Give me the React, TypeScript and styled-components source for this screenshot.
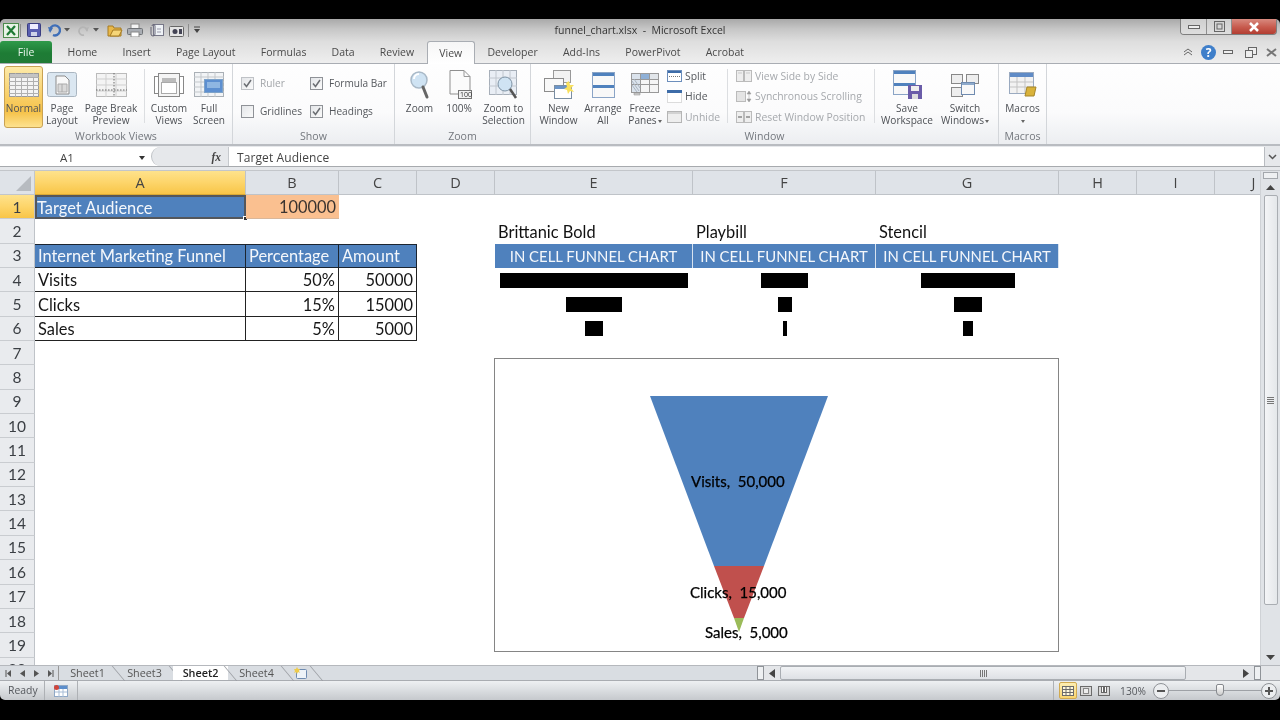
import React from "react";
import styled, { createGlobalStyle } from "styled-components";

const Global = createGlobalStyle`
  html, body { margin: 0; padding: 0; background: #000; }
  body { font-family: "Open Sans", "Liberation Sans", sans-serif; }
  * { box-sizing: border-box; }
`;

const Page = styled.div`
  width: 1280px; height: 720px; background: #000; overflow: hidden;
  padding: 19px 0 20px; display: flex; flex-direction: column; filter: blur(0.3px);
`;
const Chrome = styled.div`
  height: 45px; flex: none;
  background: linear-gradient(180deg, #a9a9a9 0%, #c6c6c6 22%, #dedede 50%, #efefef 100%);
  border-radius: 5px 5px 0 0;
`;
const TitleBar = styled.div`
  height: 22px; display: grid; grid-template-columns: 1fr auto 1fr; align-items: start;
`;
const Qat = styled.div`
  display: flex; align-items: center; height: 22px; padding-left: 3px;
  & > svg { flex: none; }
`;
const Gap = styled.span<{ $w: number }>`
  width: ${p => p.$w}px; flex: none;
`;
const QatSep = styled.span`
  width: 1px; height: 13px; background: #8d8d8d; flex: none;
`;
const Title = styled.div`
  font-size: 10.5px; line-height: 22px; color: #333; white-space: pre;
`;
const WinButtons = styled.div`
  justify-self: end; display: flex; height: 16px; margin-right: 3px;
  border: 1px solid #7e7e7e; border-top: none; border-radius: 0 0 4px 4px; overflow: hidden;
`;
const WinButton = styled.div<{ $w: number; $close?: boolean }>`
  width: ${p => p.$w}px; display: flex; align-items: center; justify-content: center;
  border-right: 1px solid #8e8e8e;
  background: ${p => p.$close
    ? "linear-gradient(180deg, #d88a7f 0%, #c75a4d 55%, #b23d31 100%)"
    : "linear-gradient(180deg, #cfcfcf 0%, #dedede 100%)"};
  &:last-child { border-right: none; }
`;
const TabRow = styled.div`
  height: 23px; display: flex; align-items: stretch; border-bottom: 1px solid #a9adb3;
`;
const FileTab = styled.div`
  width: 52px; margin-right: 3px; background: linear-gradient(180deg, #2f9a4a 0%, #1e7c35 55%, #207a36 100%);
  color: #eaf5ec; font-size: 10.5px; display: flex; align-items: center; justify-content: center;
  border-radius: 3px 3px 0 0;
`;
const Tab = styled.div<{ $active?: boolean }>`
  padding: 0 ${p => (p.$active ? 11.6 : 12.6)}px; font-size: 10.5px; line-height: 22px; color: #4a4a4a; white-space: nowrap;
  margin-bottom: ${p => (p.$active ? "-1px" : "0")};
  ${p => p.$active ? "background: linear-gradient(180deg,#f6f6f6,#fff); border: 1px solid #a9adb3; border-bottom: none; border-radius: 3px 3px 0 0;" : ""}
`;
const RightControls = styled.div`
  margin-left: auto; display: flex; align-items: center; padding-right: 3.5px;
  & > svg { flex: none; }
`;
const Ribbon = styled.div`
  height: 80px; flex: none; display: flex;
  background: linear-gradient(180deg, #fefefe 0%, #fbfbfc 60%, #eceef1 100%);
`;
const Group = styled.div<{ $w: number }>`
  width: ${p => p.$w}px; flex: none; display: flex; flex-direction: column;
  border-right: 1px solid #d3d6da;
`;
const GroupBody = styled.div<{ $pad?: number }>`
  height: 63px; display: flex; padding: 2px 0 0 ${p => p.$pad ?? 0}px;
`;
const GroupLabel = styled.div`
  height: 17px; text-align: center; font-size: 10.6px; line-height: 18px; color: #74787e;
`;
const BigButton = styled.div<{ $w: number; $on?: boolean }>`
  width: ${p => p.$w}px; height: 62px; flex: none; display: flex; flex-direction: column; align-items: center;
  border-radius: 3px; border: 1px solid ${p => (p.$on ? "#c9a253" : "transparent")};
  background: ${p => p.$on ? "linear-gradient(180deg,#fdeaa9 0%,#f9d16c 45%,#f6c24a 75%,#fde28e 100%)" : "none"};
`;
const IconBox = styled.div`
  height: 35px; width: 100%; display: flex; align-items: center; justify-content: center;
`;
const BigLabel = styled.div`
  font-size: 10.1px; line-height: 12px; color: #4e5156; text-align: center; white-space: pre;
`;
const DownCaret = styled.span`
  display: inline-block; vertical-align: middle; margin-left: 1px; border: 2.5px solid transparent; border-top: 3px solid #666; border-bottom: none;
`;
const Divider = styled.div<{ $ml: number; $mr: number }>`
  width: 1px; height: 54px; margin: 3px ${p => p.$mr}px 0 ${p => p.$ml}px; background: #dcdee1; flex: none;
`;
const CheckGrid = styled.div`
  display: grid; grid-template-columns: 69px auto; grid-auto-rows: 28px; padding: 3px 0 0 8px;
`;
const CheckRow = styled.div<{ $off?: boolean }>`
  display: flex; align-items: center; gap: 6px; font-size: 10.1px; white-space: nowrap;
  color: ${p => (p.$off ? "#a2a5a9" : "#55585d")};
`;
const CheckBox = styled.span<{ $off?: boolean }>`
  width: 13px; height: 13px; flex: none; border: 1px solid ${p => (p.$off ? "#bfc2c6" : "#8f9297")};
  background: linear-gradient(135deg, #e4e6e9, #fafafa); display: flex; align-items: center; justify-content: center;
`;
const SmallStack = styled.div<{ $w: number; $ml?: number }>`
  width: ${p => p.$w}px; margin-left: ${p => p.$ml ?? 0}px; flex: none; display: flex; flex-direction: column;
`;
const SmallRow = styled.div<{ $off?: boolean }>`
  height: 20.5px; display: flex; align-items: center; gap: 3px; font-size: 10.4px; white-space: nowrap;
  color: ${p => (p.$off ? "#a6a9ad" : "#55585d")};
  & > svg { flex: none; }
`;
const FormulaStrip = styled.div`
  height: 26px; flex: none; background: #e6e8eb; border-top: 2px solid #b9bcc1; padding-top: 1px;
`;
const FormulaInner = styled.div`
  height: 20px; display: flex; background: #fff; border-bottom: 1px solid #a7aaae;
`;
const NameBox = styled.div`
  width: 148px; flex: none; position: relative; text-align: center; padding-right: 14px;
  font-size: 11.6px; line-height: 21px; color: #444;
  &::after { content: ""; position: absolute; right: 3px; top: 9px; border: 3px solid transparent; border-top: 4px solid #333; border-bottom: none; }
`;
const FxBox = styled.div`
  width: 78px; flex: none; display: flex; align-items: center; justify-content: flex-end; padding-right: 7px;
  background: #e6e8eb; border-radius: 12px 0 0 12px; margin-left: 3px; border-left: 1px solid #bfc2c6;
  border-right: 1px solid #c6c9cd; font: italic bold 11.5px "Liberation Serif", serif; color: #444;
`;
const FormulaText = styled.div`
  flex: 1; padding-left: 8px; font-size: 12px; line-height: 21px; color: #444; letter-spacing: 0.1px;
`;
const FormulaExpand = styled.div`
  width: 16px; flex: none; background: #e6e8eb; border-left: 1px solid #b9bcc1; display: flex; align-items: center; justify-content: center;
`;
const SheetArea = styled.div`
  flex: 1; display: flex; min-height: 0; background: #fff; border-top: 1px solid #c3c6ca;
`;
const SheetWrap = styled.div`
  width: 1260px; flex: none; position: relative; overflow: hidden;
`;
const SheetGrid = styled.div`
  display: grid;
  grid-template-columns: 35px 211px 93px 78px 78px 198px 183px 183px 78px 78px 78px;
  grid-template-rows: 24px repeat(20, 24.35px);
  font-family: "Lato", "Liberation Sans", sans-serif;
`;
const Corner = styled.div`
  background: #dfe3e8; border-right: 1px solid #c2c6cb; border-bottom: 1px solid #c2c6cb; position: relative;
  &::after { content: ""; position: absolute; right: 3px; bottom: 3px; border-style: solid; border-width: 0 0 15px 15px; border-color: transparent transparent #b7bbc0 transparent; }
`;
const ColHead = styled.div<{ $sel?: boolean }>`
  background: ${p => (p.$sel ? "linear-gradient(180deg,#fee28c 0%,#fdd56a 50%,#f8c548 100%)" : "#dfe3e8")};
  border-right: 1px solid #bfc3c8; border-bottom: 1px solid ${p => (p.$sel ? "#d9a935" : "#bfc3c8")};
  display: flex; align-items: center; justify-content: center; font-family: "Open Sans", sans-serif; font-size: 14.5px; color: #444;
`;
const RowHead = styled.div<{ $sel?: boolean }>`
  background: ${p => (p.$sel ? "linear-gradient(180deg,#fee28c 0%,#fdd56a 50%,#f8c548 100%)" : "#e9ebee")};
  border-right: 1px solid #bfc3c8; border-bottom: 1px solid #c9ccd0;
  display: flex; align-items: center; justify-content: center; font-size: 15.5px; color: #3b3f44;
`;
type Tone = "plain" | "title" | "target" | "head" | "body" | "chartHead";
const toneCss: Record<Tone, string> = {
  plain: "color:#111;",
  title: "background:#4f81bd;color:#f4f7fb;border:2px solid #54575c;padding-left:0;",
  target: "background:#fac090;color:#3b3430;border-bottom:1px solid #d9b79a;",
  head: "background:#4f81bd;color:#f4f7fb;border-top:1px solid #1c2530;border-right:1px solid #1c2530;border-bottom:1px solid #1c2530;",
  body: "color:#161616;border-right:1px solid #222;border-bottom:1px solid #222;",
  chartHead: "background:#4f81bd;color:#f4f7fb;border-right:1px solid #d7e2ef;font-size:14.9px;",
};
const Cell = styled.div<{ $tone: Tone; $align: string }>`
  position: relative; display: flex; align-items: center; white-space: nowrap; overflow: visible;
  justify-content: ${p => p.$align}; padding: 0 3px; font-size: 16.4px;
  ${p => toneCss[p.$tone]}
`;
const Handle = styled.span`
  position: absolute; right: -4px; bottom: -4px; width: 5px; height: 5px; background: #333; border: 1px solid #fff;
`;
const Bar = styled.span<{ $w: number }>`
  width: ${p => p.$w}px; height: 15px; background: #000; flex: none;
`;
const ChartFrame = styled.div`
  position: absolute; left: 494px; top: 187px; width: 565px; height: 294px; background: #fff; border: 1px solid #858585;
`;
const ChartSvg = styled.svg`
  display: block; position: absolute; left: -1px; top: -1px;
`;
const ChartLabel = styled.div<{ $x: number; $y: number }>`
  position: absolute; left: ${p => p.$x}px; top: ${p => p.$y}px; font-family: "Lato", sans-serif; font-size: 15px; line-height: 16px;
  color: #000; white-space: pre; font-weight: 400; -webkit-text-stroke: 0.25px #000;
`;
const VScroll = styled.div`
  width: 20px; flex: none; background: #e0e3e7; border-left: 1px solid #cfd2d6; display: flex; flex-direction: column; align-items: center;
`;
const VSplit = styled.div`
  width: 15px; height: 7px; margin-top: 1px; background: #eef0f2; border: 1px solid #a3a7ac; flex: none;
`;
const ArrowCell = styled.div<{ $h: number }>`
  height: ${p => p.$h}px; flex: none; display: flex; align-items: center; justify-content: center;
`;
const VThumb = styled.div`
  width: 14px; height: 410px; flex: none; background: linear-gradient(90deg,#f4f5f7,#e4e7ea); border: 1px solid #a9adb2; border-radius: 2px;
  display: flex; align-items: center; justify-content: center;
`;
const VSpace = styled.div` flex: 1; `;
const VGrip = styled.span`
  width: 7px; height: 7px; background: repeating-linear-gradient(180deg,#777 0 1px,transparent 1px 2px);
`;
const TabStrip = styled.div`
  height: 16px; flex: none; display: flex; background: #d9dde2; border-top: 1px solid #b5b8bd; border-bottom: 1px solid #a9acb1;
`;
const SheetNav = styled.div`
  width: 59px; flex: none; display: flex; align-items: center; gap: 9px; padding-left: 5px; border-right: 1px solid #999;
  & > svg { flex: none; }
`;
const SheetTab = styled.div<{ $active?: boolean }>`
  width: ${p => (p.$active ? 55 : 57)}px; flex: none; text-align: center; font-size: 10.8px; line-height: 14px; position: relative;
  color: ${p => (p.$active ? "#222" : "#555")}; font-weight: ${p => (p.$active ? 600 : 400)};
  background: ${p => (p.$active ? "#fff" : "none")};
  &::after { content: ""; position: absolute; right: -3px; top: 0; height: 15px; border-right: 1px solid #9b9ea3; transform: skewX(40deg); }
`;
const NewSheet = styled.div`
  width: 32px; flex: none; display: flex; align-items: center; justify-content: center; position: relative;
  &::after { content: ""; position: absolute; right: 0; top: 0; height: 15px; border-right: 1px solid #9b9ea3; transform: skewX(40deg); }
`;
const HScroll = styled.div`
  margin-left: auto; width: 523px; flex: none; display: flex; align-items: center; background: #e4e6e9;
  & > svg { flex: none; }
`;
const HThumb = styled.div`
  width: 406px; height: 14px; margin: 0 57px 0 5px; background: linear-gradient(180deg,#f1f3f5,#dee1e5); border: 1px solid #a9adb2; border-radius: 2px;
  display: flex; align-items: center; justify-content: center; flex: none;
`;
const HGrip = styled.span`
  width: 7px; height: 7px; background: repeating-linear-gradient(90deg,#777 0 1px,transparent 1px 2px);
`;
const HSplit = styled.div<{ $ml: number; $mr: number }>`
  width: 7px; height: 14px; margin: 0 ${p => p.$mr}px 0 ${p => p.$ml}px; background: #eef0f2; border: 1px solid #8f9398; flex: none;
`;
const StatusBar = styled.div`
  height: 19px; flex: none; display: flex; align-items: center; background: linear-gradient(180deg,#eef0f2 0%,#dcdfe2 45%,#c6c9cd 100%);
  font-size: 10.4px; color: #55585d; border-radius: 0 0 5px 5px;
`;
const StatusText = styled.div`
  width: 45px; flex: none; padding-left: 8px; border-right: 1px solid #aeb1b5; height: 19px; line-height: 18px;
`;
const StatusIcon = styled.div`
  width: 33px; flex: none; height: 19px; border-right: 1px solid #aeb1b5; display: flex; align-items: center; justify-content: center;
`;
const StatusRight = styled.div`
  margin-left: auto; display: flex; align-items: center; height: 19px; border-left: 1px solid #aeb1b5; padding-left: 5px; width: 227px;
  & > svg { flex: none; }
`;
const ViewBtn = styled.div<{ $on?: boolean }>`
  width: 18px; height: 17px; flex: none; display: flex; align-items: center; justify-content: center; border-radius: 2px;
  border: 1px solid ${p => (p.$on ? "#d1aa50" : "transparent")};
  background: ${p => (p.$on ? "linear-gradient(180deg,#fdeeb3,#f9d56f)" : "none")};
`;
const ZoomText = styled.div`
  width: 33px; flex: none; text-align: right; margin-right: 7px; font-size: 10.2px;
`;
const SliderTrack = styled.div`
  width: 92px; height: 1px; flex: none; background: #9ea1a6; position: relative;
`;
const SliderKnob = styled.span`
  position: absolute; left: 47px; top: -6px; width: 8px; height: 12px; background: linear-gradient(180deg,#fff,#ccc);
  border: 1px solid #85888d; border-radius: 2px 2px 4px 4px;
`;

const Ic: React.FC<{ w: number; h: number; children: React.ReactNode }> = ({ w, h, children }) => (
  <svg width={w} height={h} viewBox={`0 0 ${w} ${h}`} fill="none">{children}</svg>
);

const TinyCaret = () => <Ic w={7} h={4}><path d="M0 0h6L3 3.500z" fill="#555" /></Ic>;

const icons = {
  normal: <Ic w={30} h={24}><rect x=".5" y=".5" width="29" height="23" fill="#f4f4f4" stroke="#9a9a9a" /><path d="M0 4.500h30M0 8.500h30M0 12.500h30M0 16.500h30M0 20.500h30M6.500 0v24M12.500 0v24M18.500 0v24M24.500 0v24" stroke="#b0b0b0" /><rect x="1" y="1" width="28" height="3" fill="#c4c4c4" /></Ic>,
  layout: <Ic w={30} h={25}><rect x=".5" y=".5" width="29" height="24" rx="2" fill="#dbe7f1" stroke="#aab6c1" /><path d="M9 4h9l4 4v14H9z" fill="#f8f8f8" stroke="#8b8b8b" /><path d="M11 12h9v8h-9z" fill="#d9d9d9" stroke="#aaa" /><path d="M15 12v8" stroke="#aaa" /></Ic>,
  breakV: <Ic w={31} h={24}><rect x=".5" y=".5" width="30" height="23" fill="#f4f4f4" stroke="#bbb" /><path d="M0 6h31M0 12h31M0 18h31M10 0v24M20 0v24" stroke="#cfcfcf" /><path d="M0 17h31M18 0v24" stroke="#6a6a6a" strokeDasharray="1.500 1.500" /></Ic>,
  custom: <Ic w={30} h={24}><rect x=".5" y="3.500" width="29" height="17" fill="#fff" stroke="#888" /><rect x="4.500" y=".5" width="21" height="23" fill="#f5f5f5" stroke="#888" /><rect x="8" y="5" width="14" height="5" fill="#bbb" /><rect x="7.500" y="9.500" width="15" height="11" fill="#fff" stroke="#aaa" /></Ic>,
  full: <Ic w={30} h={25}><rect x=".5" y=".5" width="29" height="24" fill="#f2f4f6" stroke="#aab0b6" /><path d="M0 5h30M0 10h30M0 15h30M0 20h30M7 0v25M14 0v25M21 0v25" stroke="#c3c7cb" /><rect x="10.500" y="7.500" width="18" height="13" fill="#5d8fd0" stroke="#7da2c9" /><rect x="13" y="10" width="13" height="6" fill="#8fb6e2" /></Ic>,
  zoom: <Ic w={19} h={28}><circle cx="9" cy="9" r="8" fill="#cfe3f3" stroke="#a9b9c7" strokeWidth="1.500" /><path d="M4 8a5 5 0 0 1 5-5" stroke="#fff" strokeWidth="2" /><path d="M13 16l4 10" stroke="#666" strokeWidth="3" strokeLinecap="round" /></Ic>,
  hundred: <Ic w={25} h={30}><path d="M3 .5h14l6 6V24H3z" fill="#fbfbfb" stroke="#8f8f8f" /><path d="M17 .5v6h6" stroke="#999" /><rect x="11.500" y="20.500" width="13" height="8" fill="#f2f2f2" stroke="#777" /><text x="13" y="27" fontSize="7" fontFamily="Open Sans" fill="#333">100</text></Ic>,
  zoomSel: <Ic w={29} h={30}><rect x=".5" y=".5" width="27" height="24" fill="#e9eef5" stroke="#a7afb9" /><path d="M0 8h28M0 16h28M7 0v25M14 0v25M21 0v25" stroke="#c0c6ce" /><circle cx="16" cy="14" r="7" fill="#cfe3f3" stroke="#7f93a5" /><path d="M21 19l6 9" stroke="#555" strokeWidth="2.500" /></Ic>,
  newWin: <Ic w={30} h={29}><rect x="9.500" y=".5" width="17" height="12" fill="#f2f2f2" stroke="#999" /><rect x=".5" y="8.500" width="19" height="13" fill="#f8f8f8" stroke="#8c8c8c" /><rect x="10.500" y="15.500" width="17" height="13" fill="#fff" stroke="#7a8ea3" /><rect x="11" y="16" width="16" height="3" fill="#6a94c8" /><path d="M25 11l1 4 4 0-3 3 3 4-4-1-2 3-1-4-3-1 3-2-1-4z" fill="#f8e05c" /></Ic>,
  arrange: <Ic w={23} h={26}><rect x=".5" y=".5" width="22" height="25" fill="#f8f8f8" stroke="#8aa4c6" /><rect x="1" y="1" width="21" height="3" fill="#4f81bd" /><rect x="1" y="13" width="21" height="3" fill="#4f81bd" /></Ic>,
  freeze: <Ic w={28} h={23}><rect x=".5" y=".5" width="27" height="19" fill="#f5f5f5" stroke="#999" /><rect x="1" y="1" width="26" height="5" fill="#e2e6ea" /><rect x="1" y="1" width="9" height="18" fill="#dbe3ec" /><rect x="10" y="1" width="8" height="5" fill="#8fb0d6" /><path d="M0 6.500h28M0 11.500h28M9.500 0v20M18.500 0v20" stroke="#999" /><path d="M1 8l7 10M1 12l5 7M3 6l6 9" stroke="#a9b4c0" /><path d="M3 20h6v2H3z" fill="#d0d0d0" stroke="#888" strokeWidth=".5" /></Ic>,
  split: <Ic w={15} h={12}><rect x=".5" y=".5" width="14" height="11" fill="#fff" stroke="#6c8ebc" /><rect x="1" y="1" width="13" height="2" fill="#3d6ca8" /><path d="M2 6.500h11" stroke="#777" strokeDasharray="1 1" /></Ic>,
  hide: <Ic w={15} h={13}><rect x=".5" y=".5" width="14" height="12" fill="#fff" stroke="#bbb" strokeDasharray="1 1" /><rect x="0" y="0" width="15" height="3" fill="#3d6ca8" /></Ic>,
  unhide: <Ic w={15} h={12}><rect x=".5" y=".5" width="14" height="11" fill="#eee" stroke="#b5b5b5" /><rect x="1" y="1" width="13" height="2" fill="#d2d2d2" /></Ic>,
  sideBySide: <Ic w={16} h={12}><rect x=".5" y=".5" width="7" height="11" fill="#eee" stroke="#bbb" /><rect x="8.500" y=".5" width="7" height="11" fill="#eee" stroke="#bbb" /><path d="M2 3h4M10 3h4" stroke="#c9c9c9" /></Ic>,
  syncScroll: <Ic w={16} h={13}><rect x=".5" y="1.500" width="9" height="10" fill="#e4e4e4" stroke="#bbb" /><path d="M13 1l2 3h-4zM13 12l2-3h-4zM13 4v5" fill="#999" stroke="#999" strokeWidth=".5" /></Ic>,
  resetPos: <Ic w={16} h={12}><rect x=".5" y=".5" width="7" height="11" fill="#eee" stroke="#bbb" /><rect x="8.500" y=".5" width="7" height="11" fill="#eee" stroke="#bbb" /><path d="M2 6h4M14 6h-4" stroke="#8a8a8a" strokeWidth="1.500" /></Ic>,
  save: <Ic w={29} h={29}><rect x=".5" y=".5" width="22" height="24" fill="#f8f8f8" stroke="#8aa4c6" /><rect x="1" y="1" width="21" height="3" fill="#4f81bd" /><rect x="1" y="13" width="21" height="3" fill="#4f81bd" /><rect x="15" y="15" width="14" height="14" fill="#6a5ca8" /><rect x="18" y="16" width="8" height="5" fill="#eee" /><rect x="19" y="24" width="6" height="5" fill="#ddd" /></Ic>,
  switchW: <Ic w={28} h={24}><rect x=".5" y="1.500" width="11" height="9" fill="#eee" stroke="#888" /><rect x="15.500" y="1.500" width="12" height="9" fill="#eee" stroke="#888" /><rect x=".5" y="14.500" width="11" height="9" fill="#eee" stroke="#888" /><rect x="10.500" y="9.500" width="13" height="12" fill="#f8f8f8" stroke="#6f8bb0" /><rect x="11" y="10" width="12" height="2" fill="#8eaacb" /></Ic>,
  macros: <Ic w={28} h={25}><rect x=".5" y=".5" width="24" height="21" fill="#f2f2f2" stroke="#9aaac0" /><rect x="1" y="1" width="23" height="4" fill="#5f8bc6" /><path d="M1 10h23M1 15h23M8 5v16M16 5v16" stroke="#c3c3c3" /><path d="M18 15h9l-2 9h-9z" fill="#d9b23a" stroke="#a4852a" /></Ic>,
};

const Big: React.FC<{ w: number; on?: boolean; icon: React.ReactNode; label: React.ReactNode }> = ({ w, on, icon, label }) => (
  <BigButton $w={w} $on={on}><IconBox>{icon}</IconBox><BigLabel>{label}</BigLabel></BigButton>
);

const Check = () => <svg width="11" height="11" viewBox="0 0 11 11" fill="none"><path d="M2 5.500l2.500 3L9 2" stroke="#6b6e73" strokeWidth="1.500" /></svg>;

const COLS = ["A", "B", "C", "D", "E", "F", "G", "H", "I", "J"];
type CellSpec = { t?: string; tone?: Tone; align?: string; bar?: number; handle?: boolean };
const END = "flex-end", MID = "center";
const CELLS: Record<string, CellSpec> = {
  A1: { t: "Target Audience", tone: "title", handle: true },
  B1: { t: "100000", tone: "target", align: END },
  E2: { t: "Brittanic Bold" }, F2: { t: "Playbill" }, G2: { t: "Stencil" },
  A3: { t: "Internet Marketing Funnel", tone: "head" },
  B3: { t: "Percentage", tone: "head" },
  C3: { t: "Amount", tone: "head" },
  E3: { t: "IN CELL FUNNEL CHART", tone: "chartHead", align: MID },
  F3: { t: "IN CELL FUNNEL CHART", tone: "chartHead", align: MID },
  G3: { t: "IN CELL FUNNEL CHART", tone: "chartHead", align: MID },
  A4: { t: "Visits", tone: "body" }, B4: { t: "50%", tone: "body", align: END }, C4: { t: "50000", tone: "body", align: END },
  A5: { t: "Clicks", tone: "body" }, B5: { t: "15%", tone: "body", align: END }, C5: { t: "15000", tone: "body", align: END },
  A6: { t: "Sales", tone: "body" }, B6: { t: "5%", tone: "body", align: END }, C6: { t: "5000", tone: "body", align: END },
  E4: { bar: 188 }, E5: { bar: 56 }, E6: { bar: 18 },
  F4: { bar: 47 }, F5: { bar: 14 }, F6: { bar: 4 },
  G4: { bar: 94 }, G5: { bar: 28 }, G6: { bar: 10 },
};

export default function App() {
  const rows = Array.from({ length: 20 }, (_, i) => i + 1);
  return (
    <Page>
      <Global />
      <Chrome>
        <TitleBar>
          <Qat>
            <Ic w={16} h={15}><rect x=".5" y=".5" width="15" height="14" fill="#e8f3e6" stroke="#4c8c4c" /><path d="M4 3l8 9M12 3l-8 9" stroke="#1f7a35" strokeWidth="2.200" /></Ic>
            <Gap $w={1} /><QatSep /><Gap $w={6} />
            <Ic w={14} h={14}><rect x=".5" y=".5" width="13" height="13" rx="1" fill="#5a5fb0" stroke="#3a3d80" /><rect x="3" y="1" width="8" height="5" fill="#eef" /><rect x="4" y="9" width="6" height="4" fill="#cfd3e8" /></Ic>
            <Gap $w={7} />
            <Ic w={13} h={13}><path d="M2 7a5 5 0 1 1 3 4" stroke="#3f6fb8" strokeWidth="2.400" /><path d="M0 3l5 1-3 5z" fill="#3f6fb8" /></Ic>
            <Gap $w={3} />
            <TinyCaret />
            <Gap $w={6} />
            <Ic w={12} h={12}><path d="M10 7a4 4 0 1 0-3 4" stroke="#b5b5b5" strokeWidth="1.800" /><path d="M12 3l-4 1 2 4z" fill="#b5b5b5" /></Ic>
            <Gap $w={4} />
            <TinyCaret />
            <Gap $w={7} />
            <Ic w={16} h={14}><path d="M1 3h5l1 2h7v8H1z" fill="#e8b84a" stroke="#a57a22" /><path d="M3 13l3-6h9l-3 6z" fill="#f6d679" stroke="#a57a22" /></Ic>
            <Gap $w={4} />
            <Ic w={16} h={14}><rect x="4" y="1" width="8" height="5" fill="#f4f4f4" stroke="#888" /><rect x=".5" y="5.500" width="15" height="6" rx="1" fill="#a9adb3" stroke="#6f7276" /><rect x="4" y="9" width="8" height="5" fill="#fff" stroke="#888" /></Ic>
            <Gap $w={5} />
            <Ic w={16} h={14}><rect x="5.500" y="1.500" width="10" height="11" fill="#eef2f6" stroke="#778" /><path d="M3 4v7a2 2 0 0 0 4 0V3a1.500 1.500 0 0 0-3 0" stroke="#667" /><path d="M9 6h4M9 9h4" stroke="#99a" /></Ic>
            <Gap $w={5} />
            <Ic w={15} h={13}><rect x=".5" y="2.500" width="14" height="10" rx="1" fill="#e4e4e4" stroke="#666" /><circle cx="6" cy="7.500" r="2.500" fill="#445" /><rect x="10" y="5" width="3" height="5" fill="#445" /></Ic>
            <Gap $w={4} /><QatSep /><Gap $w={5} />
            <Ic w={7} h={8}><path d="M0 1h6" stroke="#444" /><path d="M0 3h6L3 7z" fill="#444" /></Ic>
          </Qat>
          <Title>funnel_chart.xlsx  -  Microsoft Excel</Title>
          <WinButtons>
            <WinButton $w={26}><Ic w={12} h={4}><rect x=".5" y=".5" width="11" height="3" fill="#eee" stroke="#666" /></Ic></WinButton>
            <WinButton $w={25}><Ic w={11} h={11}><rect x=".5" y=".5" width="10" height="10" fill="none" stroke="#666" /><rect x="3" y="3" width="5" height="5" fill="none" stroke="#666" /></Ic></WinButton>
            <WinButton $w={44} $close><Ic w={12} h={10}><path d="M2 1l8 8M10 1l-8 8" stroke="#fff" strokeWidth="2.500" /></Ic></WinButton>
          </WinButtons>
        </TitleBar>
        <TabRow>
          <FileTab>File</FileTab>
          <Tab>Home</Tab><Tab>Insert</Tab><Tab>Page Layout</Tab><Tab>Formulas</Tab><Tab>Data</Tab><Tab>Review</Tab>
          <Tab $active>View</Tab>
          <Tab>Developer</Tab><Tab>Add-Ins</Tab><Tab>PowerPivot</Tab><Tab>Acrobat</Tab>
          <RightControls>
            <Ic w={10} h={8}><path d="M1 4l4-3 4 3M1 7l4-3 4 3" stroke="#666" /></Ic>
            <Gap $w={7.5} />
            <Ic w={15} h={15}><circle cx="7.500" cy="7.500" r="7.500" fill="#3f7fca" /><text x="7.500" y="12" fontSize="12" fontWeight="700" textAnchor="middle" fontFamily="Open Sans" fill="#fff">?</text></Ic>
            <Gap $w={7.5} />
            <Ic w={10} h={4}><rect x=".5" y=".5" width="9" height="3" fill="#eee" stroke="#666" /></Ic>
            <Gap $w={12} />
            <Ic w={12} h={11}><rect x="3.500" y=".5" width="8" height="7" fill="#eee" stroke="#666" /><rect x=".5" y="3.500" width="7" height="7" fill="#eee" stroke="#666" /></Ic>
            <Gap $w={8.5} />
            <Ic w={11} h={9}><path d="M1 1l9 7M10 1l-9 7" stroke="#777" strokeWidth="2" /></Ic>
          </RightControls>
        </TabRow>
      </Chrome>

      <Ribbon>
        <Group $w={233}>
          <GroupBody $pad={4}>
            <Big w={39} on icon={icons.normal} label="Normal" />
            <Big w={38} icon={icons.layout} label={"Page\nLayout"} />
            <Big w={60} icon={icons.breakV} label={"Page Break\nPreview"} />
            <Divider $ml={3} $mr={4} />
            <Big w={40} icon={icons.custom} label={"Custom\nViews"} />
            <Big w={40} icon={icons.full} label={"Full\nScreen"} />
          </GroupBody>
          <GroupLabel>Workbook Views</GroupLabel>
        </Group>
        <Group $w={162}>
          <GroupBody>
            <CheckGrid>
              <CheckRow $off><CheckBox $off><Check /></CheckBox>Ruler</CheckRow>
              <CheckRow><CheckBox><Check /></CheckBox>Formula Bar</CheckRow>
              <CheckRow><CheckBox />Gridlines</CheckRow>
              <CheckRow><CheckBox><Check /></CheckBox>Headings</CheckRow>
            </CheckGrid>
          </GroupBody>
          <GroupLabel>Show</GroupLabel>
        </Group>
        <Group $w={136}>
          <GroupBody $pad={5}>
            <Big w={39} icon={icons.zoom} label="Zoom" />
            <Big w={40} icon={icons.hundred} label="100%" />
            <Big w={49} icon={icons.zoomSel} label={"Zoom to\nSelection"} />
          </GroupBody>
          <GroupLabel>Zoom</GroupLabel>
        </Group>
        <Group $w={468}>
          <GroupBody $pad={5}>
            <Big w={45} icon={icons.newWin} label={"New\nWindow"} />
            <Big w={44} icon={icons.arrange} label={"Arrange\nAll"} />
            <Big w={40} icon={icons.freeze} label={<>{"Freeze\nPanes"}<DownCaret /></>} />
            <SmallStack $w={60} $ml={2}>
              <SmallRow>{icons.split}Split</SmallRow>
              <SmallRow>{icons.hide}Hide</SmallRow>
              <SmallRow $off>{icons.unhide}Unhide</SmallRow>
            </SmallStack>
            <Divider $ml={0} $mr={8} />
            <SmallStack $w={138}>
              <SmallRow $off>{icons.sideBySide}View Side by Side</SmallRow>
              <SmallRow $off>{icons.syncScroll}Synchronous Scrolling</SmallRow>
              <SmallRow $off>{icons.resetPos}Reset Window Position</SmallRow>
            </SmallStack>
            <Divider $ml={0} $mr={3} />
            <Big w={58} icon={icons.save} label={"Save\nWorkspace"} />
            <Big w={58} icon={icons.switchW} label={<>{"Switch\nWindows"}<DownCaret /></>} />
          </GroupBody>
          <GroupLabel>Window</GroupLabel>
        </Group>
        <Group $w={48}>
          <GroupBody>
            <Big w={47} icon={icons.macros} label={<>{"Macros\n"}<DownCaret /></>} />
          </GroupBody>
          <GroupLabel>Macros</GroupLabel>
        </Group>
      </Ribbon>

      <FormulaStrip>
        <FormulaInner>
          <NameBox>A1</NameBox>
          <FxBox>fx</FxBox>
          <FormulaText>Target Audience</FormulaText>
          <FormulaExpand><Ic w={9} h={6}><path d="M1 1l3.500 3.500L8 1" stroke="#555" strokeWidth="1.500" /></Ic></FormulaExpand>
        </FormulaInner>
      </FormulaStrip>

      <SheetArea>
        <SheetWrap>
          <SheetGrid>
            <Corner />
            {COLS.map(c => <ColHead key={c} $sel={c === "A"}>{c}</ColHead>)}
            {rows.map(r => (
              <React.Fragment key={r}>
                <RowHead $sel={r === 1}>{r}</RowHead>
                {COLS.map(c => {
                  const s = CELLS[`${c}${r}`] ?? {};
                  return (
                    <Cell key={c} $tone={s.tone ?? "plain"} $align={s.align ?? (s.bar ? MID : "flex-start")}>
                      {s.t}
                      {s.bar ? <Bar $w={s.bar} /> : null}
                      {s.handle ? <Handle /> : null}
                    </Cell>
                  );
                })}
              </React.Fragment>
            ))}
          </SheetGrid>
          <ChartFrame>
            <ChartSvg width="565" height="294" viewBox="0 0 565 294">
              <polygon points="156,38 334,38 270,208 220,208" fill="#4f81bd" />
              <polygon points="220,208 270,208 250,260 240,260" fill="#c0504d" />
              <polygon points="240,260 250,260 245,274" fill="#9bbb59" />
            </ChartSvg>
            <ChartLabel $x={196} $y={114}>{"Visits,  50,000"}</ChartLabel>
            <ChartLabel $x={195} $y={225}>{"Clicks,  15,000"}</ChartLabel>
            <ChartLabel $x={210} $y={265}>{"Sales,  5,000"}</ChartLabel>
          </ChartFrame>
        </SheetWrap>
        <VScroll>
          <VSplit />
          <ArrowCell $h={16}><Ic w={9} h={5}><path d="M0 5h9L4.500 0z" fill="#444" /></Ic></ArrowCell>
          <VThumb><VGrip /></VThumb>
          <VSpace />
          <ArrowCell $h={15}><Ic w={9} h={5}><path d="M0 0h9L4.500 5z" fill="#444" /></Ic></ArrowCell>
        </VScroll>
      </SheetArea>

      <TabStrip>
        <SheetNav>
          <Ic w={6} h={7}><path d="M1 0v7" stroke="#555" /><path d="M6 0v7L2 3.500z" fill="#555" /></Ic>
          <Ic w={5} h={7}><path d="M5 0v7L0 3.500z" fill="#555" /></Ic>
          <Ic w={5} h={7}><path d="M0 0v7l5-3.500z" fill="#555" /></Ic>
          <Ic w={6} h={7}><path d="M0 0v7l4-3.500z" fill="#555" /><path d="M5 0v7" stroke="#555" /></Ic>
        </SheetNav>
        <SheetTab>Sheet1</SheetTab>
        <SheetTab>Sheet3</SheetTab>
        <SheetTab $active>Sheet2</SheetTab>
        <SheetTab>Sheet4</SheetTab>
        <NewSheet><Ic w={14} h={12}><rect x="2.500" y="2.500" width="10" height="9" rx="1" fill="#eef3f8" stroke="#6f8bb0" /><path d="M3 0l1 2 2 0-1 2 1 2-2-1-1 2-1-2-2 1 1-2-1-2 2 0z" fill="#eecb4a" /></Ic></NewSheet>
        <HScroll>
          <HSplit $ml={0} $mr={5} />
          <Ic w={6} h={9}><path d="M6 0v9L0 4.500z" fill="#444" /></Ic>
          <HThumb><HGrip /></HThumb>
          <Ic w={6} h={9}><path d="M0 0v9l6-4.500z" fill="#444" /></Ic>
          <HSplit $ml={5} $mr={0} />
        </HScroll>
      </TabStrip>

      <StatusBar>
        <StatusText>Ready</StatusText>
        <StatusIcon><Ic w={14} h={12}><rect x=".5" y=".5" width="13" height="11" fill="#fff" stroke="#8fa8c6" /><rect x="1" y="1" width="12" height="3" fill="#5c8ecb" /><path d="M1 7h12M5 4v8M9 4v8" stroke="#a8bdd6" /><circle cx="2.500" cy="2.500" r="2.500" fill="#d0453a" /></Ic></StatusIcon>
        <StatusRight>
          <ViewBtn $on><Ic w={12} h={10}><rect x=".5" y=".5" width="11" height="9" fill="#fff8dc" stroke="#6b6b6b" /><path d="M0 3.500h12M0 6.500h12M4 0v10M8 0v10" stroke="#6b6b6b" /></Ic></ViewBtn>
          <ViewBtn><Ic w={12} h={10}><rect x=".5" y=".5" width="11" height="9" fill="#d8d8d8" stroke="#6b6b6b" /><rect x="3.500" y="2.500" width="5" height="5" fill="#eee" stroke="#888" /></Ic></ViewBtn>
          <ViewBtn><Ic w={12} h={10}><rect x=".5" y=".5" width="11" height="9" fill="#d8d8d8" stroke="#6b6b6b" /><rect x="3.500" y=".5" width="2" height="6" fill="#fff" stroke="#666" /><rect x="6.500" y=".5" width="2" height="6" fill="#fff" stroke="#666" /></Ic></ViewBtn>
          <ZoomText>130%</ZoomText>
          <Ic w={16} h={16}><circle cx="8" cy="8" r="7.500" fill="#eceef0" stroke="#8f9297" /><path d="M4 8h8" stroke="#555" strokeWidth="2" /></Ic>
          <SliderTrack><SliderKnob /></SliderTrack>
          <Ic w={16} h={16}><circle cx="8" cy="8" r="7.500" fill="#eceef0" stroke="#8f9297" /><path d="M4 8h8M8 4v8" stroke="#555" strokeWidth="2" /></Ic>
        </StatusRight>
      </StatusBar>
    </Page>
  );
}
